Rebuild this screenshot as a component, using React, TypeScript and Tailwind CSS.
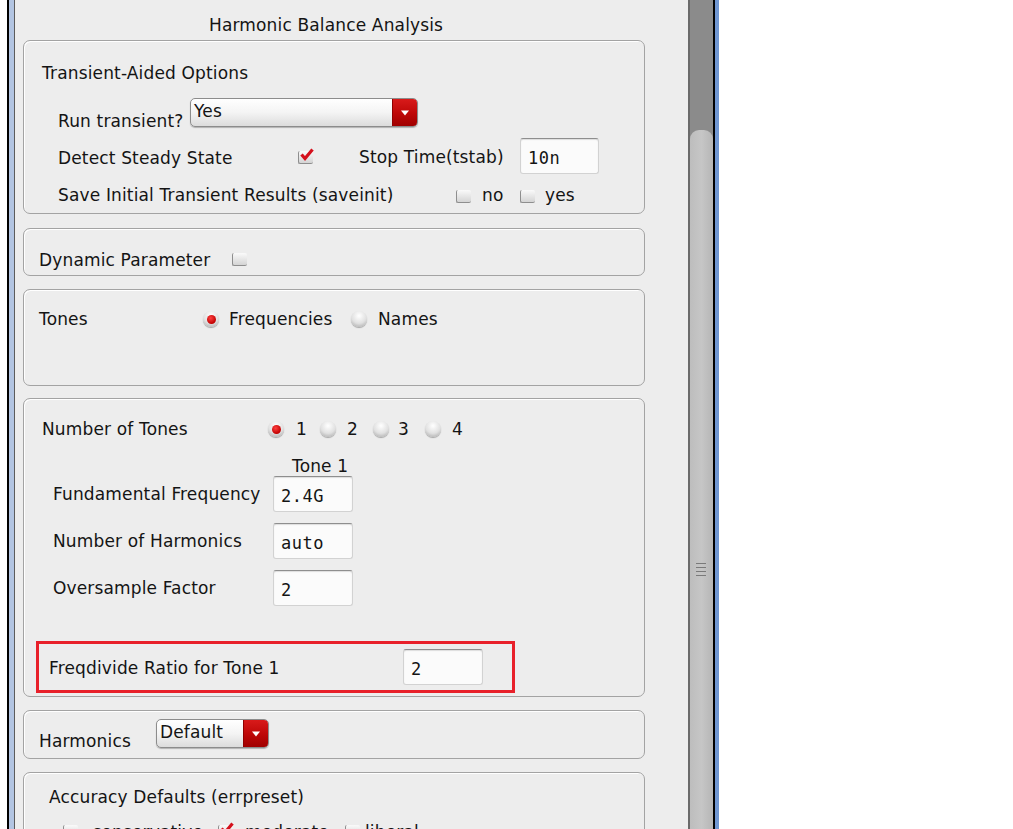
import React from "react";

function Checkbox({ checked = false }: { checked?: boolean }) {
  return (
    <span className="relative inline-block w-[16px] h-[15px] shrink-0">
      <span className="absolute left-0 bottom-0 w-[15px] h-[13px] bg-linear-to-b from-[#fafafa] to-[#d4d4d4] border-l border-b border-[#8e8e8e] rounded-[2px]" />
      {checked && (
        <svg className="absolute left-[2px] -top-[1px]" width="14" height="13" viewBox="0 0 14 13">
          <path d="M1.5 6.5 L5 10.5 L12.5 1.5" stroke="#d4101c" strokeWidth="3.2" fill="none" strokeLinejoin="miter" />
        </svg>
      )}
    </span>
  );
}

function Radio({ on = false }: { on?: boolean }) {
  return (
    <span className="inline-flex shrink-0 w-[16px] h-[16px] rounded-full items-center justify-center bg-[radial-gradient(circle_at_50%_30%,#ffffff,#e0e0e0_55%,#a0a0a0)] shadow-[0_1px_1px_rgba(0,0,0,0.3)]">
      {on && <span className="w-[9px] h-[9px] rounded-full bg-[radial-gradient(circle_at_40%_35%,#ff4040,#c00000_70%)]" />}
    </span>
  );
}

function Dropdown({ value, className }: { value: string; className: string }) {
  return (
    <div className={`flex h-[29px] rounded-[5px] border border-[#8c8c8c] overflow-hidden shadow-[0_1px_1px_rgba(0,0,0,0.25)] bg-linear-to-b from-white via-[#f4f4f4] to-[#dcdcdc] ${className}`}>
      <span className="flex-1 pl-[3px] pt-[1px] leading-[22px]">{value}</span>
      <span className="w-[25px] flex items-center justify-center bg-linear-to-b from-[#d81a1a] via-[#c00808] to-[#a00000] border-l border-[#900000]">
        <svg width="10" height="6" viewBox="0 0 10 6">
          <path d="M1 0.5 L9 0.5 L5 5.5 Z" fill="#ffffff" />
        </svg>
      </span>
    </div>
  );
}

function Field({ value, className }: { value: string; className: string }) {
  return (
    <div className={`shrink-0 h-[36px] bg-[#fbfbfb] border border-[#d2d2d2] border-t-[#8e8e8e] rounded-[3px] shadow-[inset_0_1px_1px_rgba(0,0,0,0.12)] flex items-center pl-[7px] pt-[3px] font-['DejaVu_Sans_Mono',monospace] text-[17px] tracking-[0.5px] ${className}`}>
      {value}
    </div>
  );
}

const panel = "ml-[8px] w-[622px] border border-[#a3a3a3] rounded-[7px] shadow-[inset_1px_1px_0_#ffffff]";

export default function App() {
  return (
    <div className="w-[1013px] h-[829px] overflow-hidden flex bg-white font-['DejaVu_Sans',sans-serif] text-[17px] leading-[20px] tracking-[0.15px] text-[#141414]">
      <div className="w-[7px] shrink-0 bg-white" />
      <div className="w-[2px] shrink-0 bg-black" />
      <div className="w-[5px] shrink-0 bg-[#b3c5e2]" />
      <div className="w-[1px] shrink-0 bg-[#5c5c5c]" />

      <div className="w-[673px] shrink-0 bg-[#ededed] whitespace-nowrap">
        <div className="pt-[15px] h-[35px] pl-[194px]">Harmonic Balance Analysis</div>

        {/* Transient-Aided Options */}
        <div className={`${panel} mt-[5px] h-[174px] pt-[22px] pl-[18px]`}>
          <div className="h-[20px]">Transient-Aided Options</div>
          <div className="mt-[15px] h-[29px] flex pl-[16px]">
            <div className="w-[132px] pt-[13px]">Run transient?</div>
            <Dropdown value="Yes" className="w-[228px]" />
          </div>
          <div className="mt-[11px] h-[36px] flex items-center pl-[16px]">
            <div className="w-[240px] pt-[3px]">Detect Steady State</div>
            <Checkbox checked />
            <div className="ml-[45px] w-[161px] pt-[1px]">Stop Time(tstab)</div>
            <Field value="10n" className="w-[79px]" />
          </div>
          <div className="mt-[11px] h-[20px] flex items-center pl-[16px]">
            <div className="w-[398px]">Save Initial Transient Results (saveinit)</div>
            <Checkbox />
            <div className="ml-[10px] w-[38px]">no</div>
            <Checkbox />
            <div className="ml-[9px]">yes</div>
          </div>
        </div>

        {/* Dynamic Parameter */}
        <div className={`${panel} mt-[14px] h-[48px] pt-[21px] pl-[15px]`}>
          <div className="h-[20px] flex items-start">
            <div className="w-[193px]">Dynamic Parameter</div>
            <span className="mt-[1px] flex"><Checkbox /></span>
          </div>
        </div>

        {/* Tones */}
        <div className={`${panel} mt-[13px] h-[97px] pt-[19px] pl-[15px]`}>
          <div className="h-[20px] flex items-center">
            <div className="w-[164px]">Tones</div>
            <Radio on />
            <div className="ml-[10px] w-[122px]">Frequencies</div>
            <Radio />
            <div className="ml-[11px]">Names</div>
          </div>
        </div>

        {/* Number of Tones */}
        <div className={`${panel} mt-[12px] h-[299px] pt-[20px]`}>
          <div className="ml-[18px] h-[20px] flex items-center">
            <div className="w-[226px]">Number of Tones</div>
            <div className="w-[52px] flex items-center"><Radio on /><span className="ml-[12px]">1</span></div>
            <div className="w-[53px] flex items-center"><Radio /><span className="ml-[11px]">2</span></div>
            <div className="w-[52px] flex items-center"><Radio /><span className="ml-[9px]">3</span></div>
            <div className="flex items-center"><Radio /><span className="ml-[11px]">4</span></div>
          </div>
          <div className="mt-[17px] h-[20px] ml-[268px]">Tone 1</div>
          <div className="ml-[29px] h-[36px] flex items-center">
            <div className="w-[220px]">Fundamental Frequency</div>
            <Field value="2.4G" className="w-[80px]" />
          </div>
          <div className="mt-[11px] ml-[29px] h-[36px] flex items-center">
            <div className="w-[220px]">Number of Harmonics</div>
            <Field value="auto" className="w-[80px]" />
          </div>
          <div className="mt-[11px] ml-[29px] h-[36px] flex items-center">
            <div className="w-[220px]">Oversample Factor</div>
            <Field value="2" className="w-[80px]" />
          </div>
          <div className="mt-[35px] ml-[12px] w-[479px] h-[52px] border-[3px] border-[#e8202a] flex items-center pl-[10px]">
            <div className="w-[354px] pt-[1px]">Freqdivide Ratio for Tone 1</div>
            <Field value="2" className="w-[80px]" />
          </div>
        </div>

        {/* Harmonics */}
        <div className={`${panel} mt-[13px] h-[49px] pt-[8px] pl-[15px]`}>
          <div className="h-[29px] flex">
            <div className="w-[117px] pt-[12px]">Harmonics</div>
            <Dropdown value="Default" className="w-[113px]" />
          </div>
        </div>

        {/* Accuracy Defaults */}
        <div className={`${panel} mt-[13px] h-[100px] pt-[14px]`}>
          <div className="ml-[25px] h-[20px]">Accuracy Defaults (errpreset)</div>
          <div className="mt-[15px] ml-[39px] h-[20px] flex items-start">
            <span className="mt-[1px] flex"><Checkbox /></span>
            <div className="ml-[13px] w-[126px]">conservative</div>
            <span className="mt-[1px] flex"><Checkbox checked /></span>
            <div className="ml-[11px] w-[100px]">moderate</div>
            <span className="mt-[1px] flex"><Checkbox /></span>
            <div className="ml-[4px]">liberal</div>
          </div>
        </div>
      </div>

      {/* scrollbar */}
      <div className="w-[25px] shrink-0 flex">
        <div className="w-[2px] bg-[#6a6a6a]" />
        <div className="flex-1 bg-[#8b8b8b] flex flex-col">
          <div className="h-[130px] shrink-0" />
          <div className="flex-1 bg-linear-to-r from-[#bdbdbd] via-[#c6c6c6] to-[#b6b6b6] rounded-t-[9px] pt-[433px] pl-[6px] flex flex-col gap-[3px]">
            <div className="w-[10px] h-[1px] bg-[#7a7a7a]" />
            <div className="w-[10px] h-[1px] bg-[#7a7a7a]" />
            <div className="w-[10px] h-[1px] bg-[#7a7a7a]" />
            <div className="w-[10px] h-[1px] bg-[#7a7a7a]" />
          </div>
        </div>
      </div>
      <div className="w-[2px] shrink-0 bg-black" />
      <div className="w-[4px] shrink-0 bg-[#7097d2]" />
      <div className="flex-1 bg-white" />
    </div>
  );
}
